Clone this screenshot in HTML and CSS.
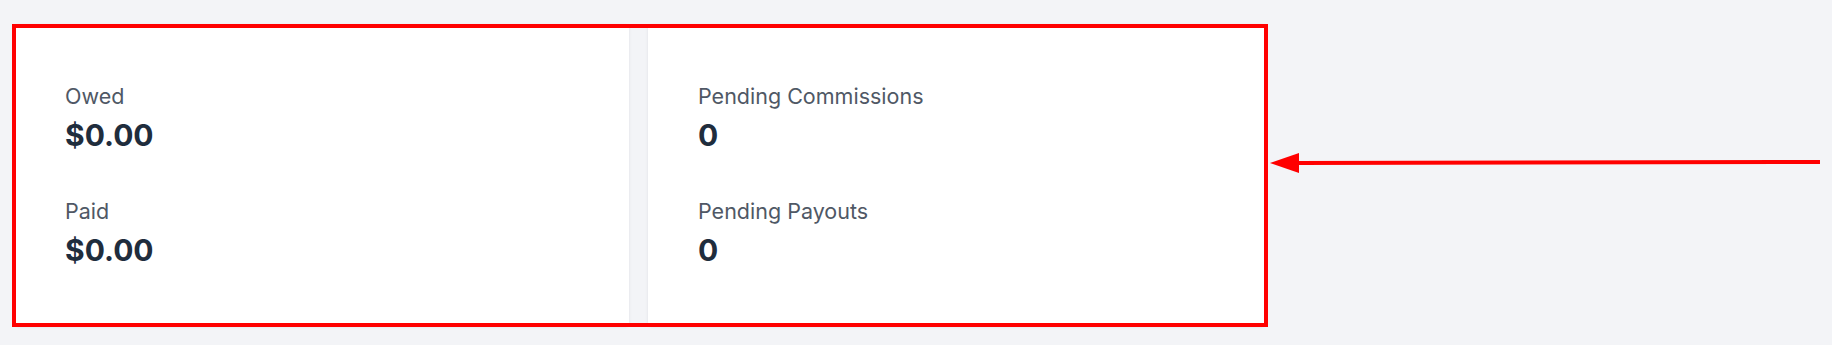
FILE: index.html
```html
<!DOCTYPE html>
<html lang="en">
<head>
    <meta charset="UTF-8">
    <meta name="viewport" content="width=device-width, initial-scale=1.0">
    <title>Affiliate Stats</title>
    <link rel="stylesheet" href="styles.css">
</head>
<body>
    <div class="page">
        <!-- Stats cards -->
        <div class="stats">
            <div class="card">
                <div class="stat">
                    <div class="label">Owed</div>
                    <div class="value">$0.00</div>
                </div>
                <div class="stat">
                    <div class="label">Paid</div>
                    <div class="value">$0.00</div>
                </div>
            </div>
            <div class="card">
                <div class="stat">
                    <div class="label">Pending Commissions</div>
                    <div class="value">0</div>
                </div>
                <div class="stat">
                    <div class="label">Pending Payouts</div>
                    <div class="value">0</div>
                </div>
            </div>

            <!-- highlight drawn over the cards -->
            <div class="highlight"></div>
        </div>

        <svg class="arrow" width="560" height="24" viewBox="0 0 560 24">
            <line x1="28" y1="12" x2="550" y2="11" stroke="#ff0000" stroke-width="4"/>
            <polygon points="0,12 29,2 29,22" fill="#ff0000"/>
        </svg>
    </div>
</body>
</html>
```

FILE: styles.css
```css
body{
    margin: 0;
    background-color: #f3f4f7;
    font-family: Inter, "Noto Sans", sans-serif;
}
.page{
    position: relative;
    height: 345px;
    padding: 24px 0 0 15px;
    box-sizing: border-box;
}
.stats{
    position: relative;
    display: grid;
    grid-template-columns: 614px 617px;
    gap: 19px;
    width: 1250px;
}
.card{
    background-color: white;
    border-radius: 4px;
    box-shadow: 0 1px 3px rgba(30, 40, 60, 0.1);
    height: 302px;
    padding: 58px 50px 0 50px;
    box-sizing: border-box;
}
.stat{
    margin-bottom: 45px;
}
.label{
    font-size: 21.5px;
    line-height: 28px;
    color: #4f5865;
}
.value{
    margin-top: 8px;
    font-size: 30px;
    line-height: 34px;
    font-weight: 700;
    color: #1f2d3d;
}
.highlight{
    position: absolute;
    left: -3px;
    top: 0;
    width: 1256px;
    height: 303px;
    border: 4px solid #ff0000;
    box-sizing: border-box;
    pointer-events: none;
}
.arrow{
    position: absolute;
    left: 1270px;
    top: 151px;
}
```
